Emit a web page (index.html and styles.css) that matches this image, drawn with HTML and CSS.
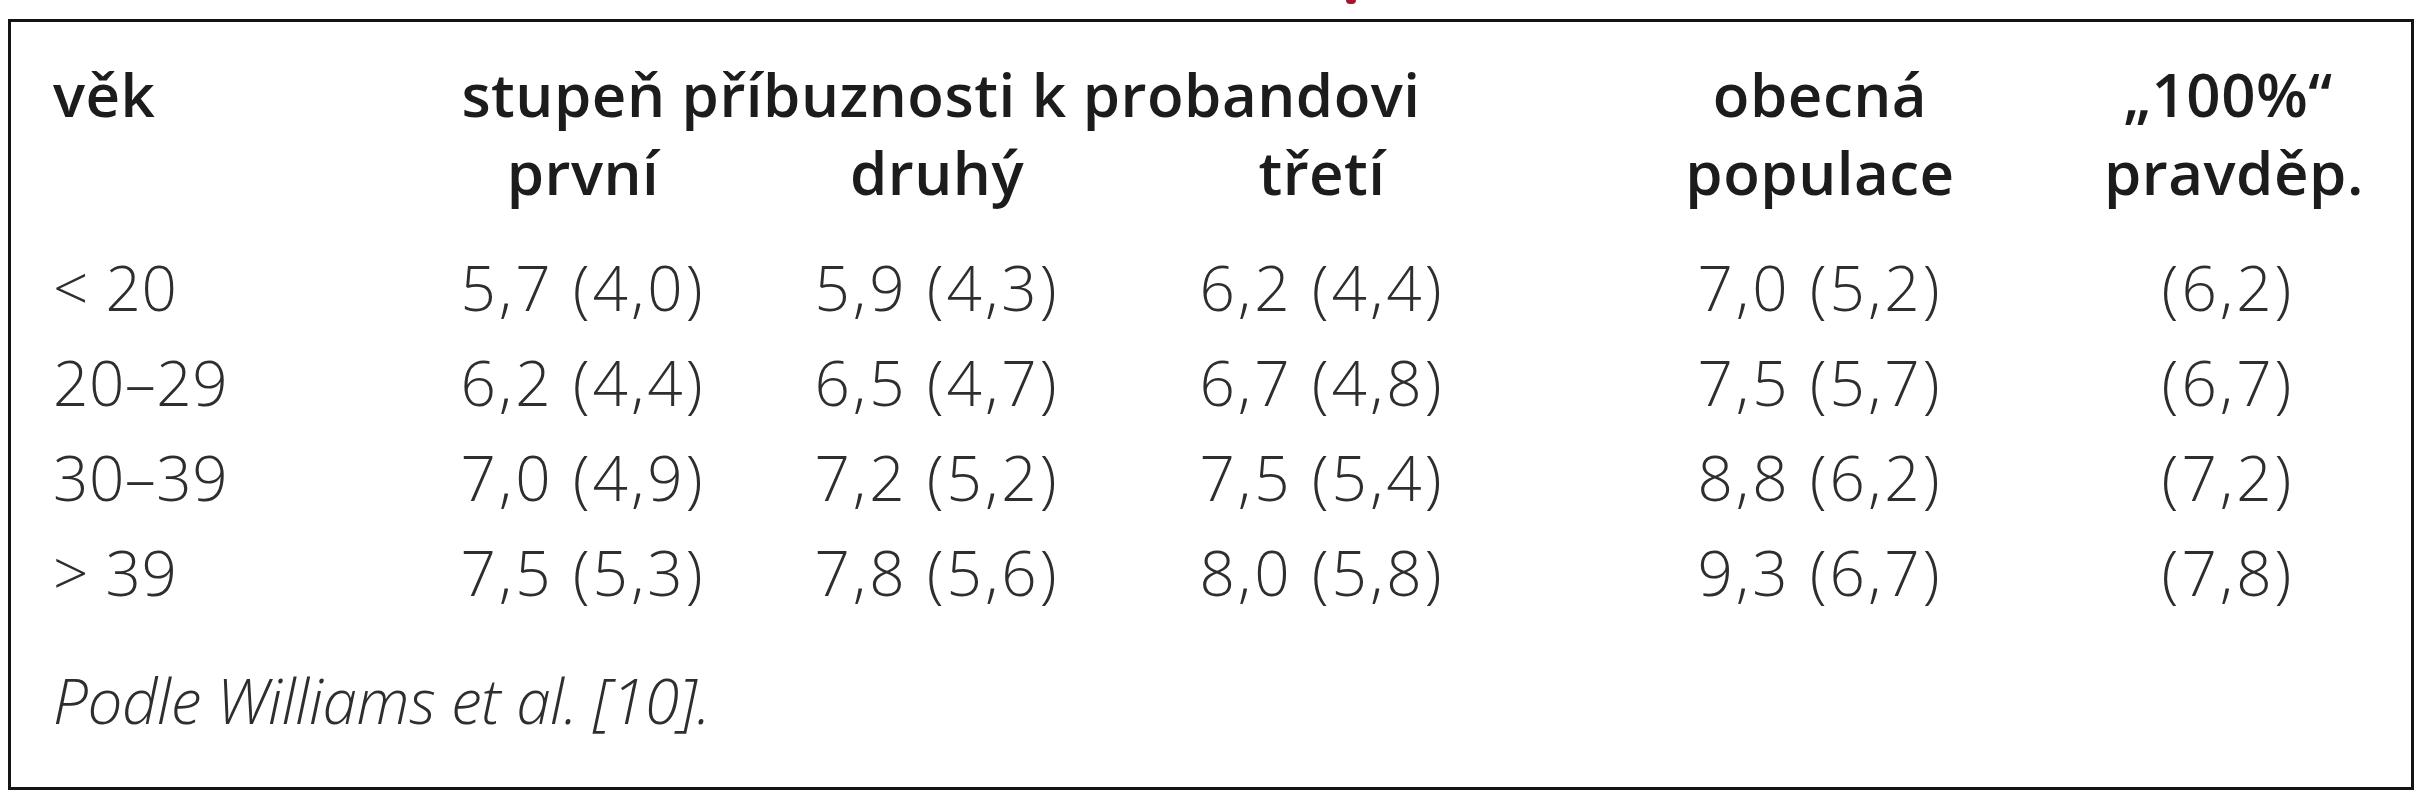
FILE: index.html
```html
<!DOCTYPE html>
<html lang="cs">
<head>
<meta charset="utf-8">
<title>Tabulka</title>
<link rel="stylesheet" href="styles.css">
</head>
<body>
<div class="caption"><span class="caption-mark"></span></div>
<div class="frame">
  <div class="grid">
    <div class="th th-left">věk</div>
    <div class="th th-group">stupeň příbuznosti k probandovi</div>
    <div class="th">obecná</div>
    <div class="th">„100%“</div>

    <div class="th"></div>
    <div class="th">první</div>
    <div class="th">druhý</div>
    <div class="th">třetí</div>
    <div class="th">populace</div>
    <div class="th">pravděp.</div>

    <div class="td td-left td-first">&lt; 20</div>
    <div class="td td-first">5,7 (4,0)</div>
    <div class="td td-first">5,9 (4,3)</div>
    <div class="td td-first">6,2 (4,4)</div>
    <div class="td td-first">7,0 (5,2)</div>
    <div class="td td-first">(6,2)</div>

    <div class="td td-left">20–29</div>
    <div class="td">6,2 (4,4)</div>
    <div class="td">6,5 (4,7)</div>
    <div class="td">6,7 (4,8)</div>
    <div class="td">7,5 (5,7)</div>
    <div class="td">(6,7)</div>

    <div class="td td-left">30–39</div>
    <div class="td">7,0 (4,9)</div>
    <div class="td">7,2 (5,2)</div>
    <div class="td">7,5 (5,4)</div>
    <div class="td">8,8 (6,2)</div>
    <div class="td">(7,2)</div>

    <div class="td td-left">&gt; 39</div>
    <div class="td">7,5 (5,3)</div>
    <div class="td">7,8 (5,6)</div>
    <div class="td">8,0 (5,8)</div>
    <div class="td">9,3 (6,7)</div>
    <div class="td">(7,8)</div>
  </div>
  <div class="note">Podle Williams et al. [10].</div>
</div>
</body>
</html>
```

FILE: styles.css
```css
html, body {
  margin: 0;
  padding: 0;
  background: #ffffff;
}

body {
  width: 2420px;
  height: 800px;
  overflow: hidden;
  font-family: "Open Sans", "Noto Sans", "DejaVu Sans", sans-serif;
  color: #2b2b2b;
}

.caption {
  height: 19px;
  display: flex;
  align-items: flex-start;
}

.caption-mark {
  display: block;
  margin-left: 1346px;
  width: 10px;
  height: 4px;
  background: #a8142c;
  border-radius: 0 0 5px 5px;
}

.frame {
  box-sizing: border-box;
  margin-left: 8px;
  width: 2406px;
  height: 771px;
  border: 3px solid #141414;
  padding: 33px 0 0 42px;
}

.grid {
  display: grid;
  grid-template-columns: 347px 366px 342px 428px 568px 248px;
}

.th {
  font-size: 60px;
  font-weight: 600;
  line-height: 78px;
  letter-spacing: 0.5px;
  color: #1c1c1c;
  text-align: center;
  white-space: nowrap;
}

.th-left {
  text-align: left;
}

.th-group {
  grid-column: 2 / 5;
  padding-right: 54px;
}

.td {
  font-size: 62px;
  font-weight: 300;
  line-height: 95px;
  letter-spacing: 3px;
  text-align: center;
  white-space: nowrap;
  color: #2e2e2e;
}

.td-first {
  margin-top: 29px;
}

.td-left {
  text-align: left;
  letter-spacing: 0.5px;
}

.note {
  margin-top: 33px;
  font-size: 62px;
  font-weight: 300;
  font-style: italic;
  line-height: 95px;
  letter-spacing: -0.4px;
  color: #2e2e2e;
}
```
